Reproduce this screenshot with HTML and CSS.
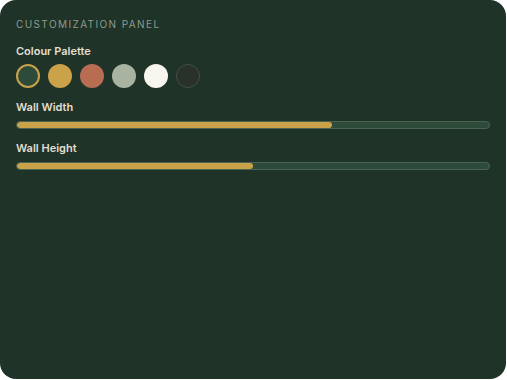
FILE: index.html
```html
<!DOCTYPE html>
<html>
<head>
    <title>Customization Panel</title>
    <link rel="stylesheet" href="styles.css">
</head>
<body>
    <div class="panel">
        <div class="panel-title">Customization Panel</div>

        <div class="field field-palette">
            <div class="field-label">Colour Palette</div>
            <div class="swatches">
                <span class="swatch swatch-forest selected"></span>
                <span class="swatch swatch-gold"></span>
                <span class="swatch swatch-clay"></span>
                <span class="swatch swatch-sage"></span>
                <span class="swatch swatch-cream"></span>
                <span class="swatch swatch-charcoal"></span>
            </div>
        </div>

        <div class="field">
            <div class="field-label">Wall Width</div>
            <div class="track"><div class="fill" style="width: 66.7%"></div></div>
        </div>

        <div class="field">
            <div class="field-label">Wall Height</div>
            <div class="track"><div class="fill" style="width: 50%"></div></div>
        </div>
    </div>
</body>
</html>
```

FILE: styles.css
```css
body {
    margin: 0;
    background: #ffffff;
    font-family: Inter, "Noto Sans", sans-serif;
}
.panel {
    width: 506px;
    height: 379px;
    box-sizing: border-box;
    padding: 16px;
    background: #1f3329;
    border-radius: 16px;
    display: flex;
    flex-direction: column;
    gap: 12px;
}
.panel-title {
    font-size: 10px;
    line-height: 14px;
    letter-spacing: 1.4px;
    text-transform: uppercase;
    color: #8e9c88;
    margin-top: 1px;
    margin-bottom: 1px;
}
.field {
    display: flex;
    flex-direction: column;
    gap: 7px;
}
.field-palette {
    gap: 6px;
}
.field-label {
    font-size: 11px;
    line-height: 14px;
    font-weight: 600;
    color: #e4dfcf;
}
.swatches {
    display: flex;
    gap: 8px;
}
.swatch {
    width: 24px;
    height: 24px;
    border-radius: 50%;
    box-sizing: border-box;
}
.swatch.selected {
    border: 2px solid #c9a24a;
}
.swatch-forest { background: #2e4a3a; }
.swatch-gold { background: #c9a24a; }
.swatch-clay { background: #b86d52; }
.swatch-sage { background: #a9b4a0; }
.swatch-cream { background: #f8f4ee; }
.swatch-charcoal {
    background: #293129;
    border: 1px solid #454f45;
}
.track {
    height: 8px;
    box-sizing: border-box;
    background: #2d4a3b;
    border: 1px solid #4a6452;
    border-radius: 4px;
    overflow: hidden;
}
.fill {
    height: 100%;
    background: #c9a24a;
    border-radius: 4px;
}
```
